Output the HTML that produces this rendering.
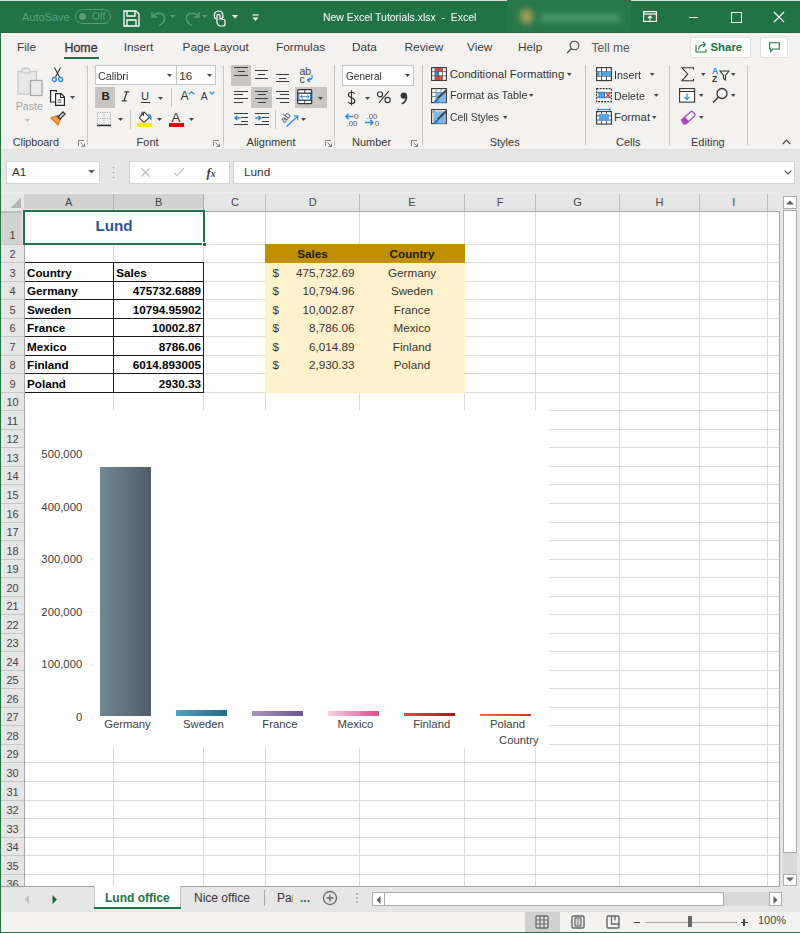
<!DOCTYPE html><html><head><meta charset="utf-8"><style>
html,body{margin:0;padding:0;}
body{width:800px;height:933px;overflow:hidden;position:relative;background:#F3F2F1;font-family:"Liberation Sans", sans-serif;}
div,svg{box-sizing:border-box;}
</style></head><body><div style="position:absolute;left:0px;top:0px;width:800px;height:1px;background:#DCDCDC"></div><div style="position:absolute;left:0px;top:1px;width:800px;height:32px;background:#217346"></div><div style="position:absolute;left:0px;top:32px;width:800px;height:1px;background:#1D6A40"></div><div style="position:absolute;left:507px;top:0;width:124px;height:32px;overflow:hidden;background:#267849"><div style="position:absolute;left:13px;top:9px;width:13px;height:15px;background:#A89E58;border-radius:7px;filter:blur(3px)"></div><div style="position:absolute;left:32px;top:14px;width:82px;height:8px;background:#4E9670;border-radius:4px;filter:blur(3px)"></div></div><div style="position:absolute;left:22px;top:11.99px;font-size:11px;line-height:11px;color:#5E9F7B;font-weight:400;white-space:nowrap;">AutoSave</div><div style="position:absolute;left:75px;top:9px;width:36px;height:15px;border:1px solid #5E9F7B;border-radius:8px"></div><div style="position:absolute;left:79px;top:13px;width:7px;height:7px;background:#5E9F7B;border-radius:4px"></div><div style="position:absolute;left:92px;top:12.04px;font-size:10px;line-height:10px;color:#5E9F7B;font-weight:400;white-space:nowrap;">Off</div><div style="position:absolute;left:322.5px;top:11.73px;font-size:11.3px;line-height:11.3px;color:#FFFFFF;font-weight:400;white-space:nowrap;transform:scaleX(0.925);transform-origin:0 0">New Excel Tutorials.xlsx&nbsp;&nbsp;-&nbsp;&nbsp;Excel</div><div style="position:absolute;left:17px;top:42.11px;font-size:11.8px;line-height:11.8px;color:#3A3A3A;font-weight:400;white-space:nowrap;">File</div><div style="position:absolute;left:64.5px;top:41.60px;font-size:12.4px;line-height:12.4px;color:#333;font-weight:400;white-space:nowrap;-webkit-text-stroke:0.3px #333">Home</div><div style="position:absolute;left:123.7px;top:42.11px;font-size:11.8px;line-height:11.8px;color:#3A3A3A;font-weight:400;white-space:nowrap;">Insert</div><div style="position:absolute;left:182.6px;top:42.11px;font-size:11.8px;line-height:11.8px;color:#3A3A3A;font-weight:400;white-space:nowrap;">Page Layout</div><div style="position:absolute;left:276px;top:42.11px;font-size:11.8px;line-height:11.8px;color:#3A3A3A;font-weight:400;white-space:nowrap;">Formulas</div><div style="position:absolute;left:352px;top:42.11px;font-size:11.8px;line-height:11.8px;color:#3A3A3A;font-weight:400;white-space:nowrap;">Data</div><div style="position:absolute;left:404.6px;top:42.11px;font-size:11.8px;line-height:11.8px;color:#3A3A3A;font-weight:400;white-space:nowrap;">Review</div><div style="position:absolute;left:467px;top:42.11px;font-size:11.8px;line-height:11.8px;color:#3A3A3A;font-weight:400;white-space:nowrap;">View</div><div style="position:absolute;left:518px;top:42.11px;font-size:11.8px;line-height:11.8px;color:#3A3A3A;font-weight:400;white-space:nowrap;">Help</div><div style="position:absolute;left:64px;top:57px;width:35px;height:2px;background:#217346"></div><div style="position:absolute;left:591.5px;top:41.76px;font-size:12.1px;line-height:12.1px;color:#555;font-weight:400;white-space:nowrap;">Tell me</div><div style="position:absolute;left:689.5px;top:37px;width:61.5px;height:20.5px;background:#fff;border:1px solid #E1DFDD;border-radius:2px"></div><div style="position:absolute;left:710.5px;top:41.85px;font-size:11.4px;line-height:11.4px;color:#217346;font-weight:700;white-space:nowrap;">Share</div><div style="position:absolute;left:759.5px;top:37px;width:28.5px;height:20.5px;background:#fff;border:1px solid #E1DFDD;border-radius:2px"></div><div style="position:absolute;left:86.5px;top:65px;width:1px;height:80px;background:#C8C6C4"></div><div style="position:absolute;left:222.8px;top:65px;width:1px;height:80px;background:#C8C6C4"></div><div style="position:absolute;left:334.4px;top:65px;width:1px;height:80px;background:#C8C6C4"></div><div style="position:absolute;left:421.5px;top:65px;width:1px;height:80px;background:#C8C6C4"></div><div style="position:absolute;left:585.4px;top:65px;width:1px;height:80px;background:#C8C6C4"></div><div style="position:absolute;left:669.4px;top:65px;width:1px;height:80px;background:#C8C6C4"></div><div style="position:absolute;left:747.2px;top:65px;width:1px;height:80px;background:#C8C6C4"></div><div style="position:absolute;left:12.7px;top:136.86px;font-size:10.8px;line-height:10.8px;color:#363636;font-weight:400;white-space:nowrap;">Clipboard</div><div style="position:absolute;left:136.6px;top:136.69px;font-size:11px;line-height:11px;color:#363636;font-weight:400;white-space:nowrap;">Font</div><div style="position:absolute;left:246.6px;top:136.69px;font-size:11px;line-height:11px;color:#363636;font-weight:400;white-space:nowrap;">Alignment</div><div style="position:absolute;left:352px;top:136.69px;font-size:11px;line-height:11px;color:#363636;font-weight:400;white-space:nowrap;">Number</div><div style="position:absolute;left:489.7px;top:136.69px;font-size:11px;line-height:11px;color:#363636;font-weight:400;white-space:nowrap;">Styles</div><div style="position:absolute;left:616px;top:136.69px;font-size:11px;line-height:11px;color:#363636;font-weight:400;white-space:nowrap;">Cells</div><div style="position:absolute;left:691px;top:136.69px;font-size:11px;line-height:11px;color:#363636;font-weight:400;white-space:nowrap;">Editing</div><div style="position:absolute;left:0px;top:149.5px;width:800px;height:44px;background:#E6E6E6"></div><div style="position:absolute;left:0px;top:149px;width:800px;height:1px;background:#E1DFDD"></div><div style="position:absolute;left:5.6px;top:160.5px;width:94px;height:23.2px;background:#fff;border:1px solid #D4D4D4"></div><div style="position:absolute;left:12px;top:166.51px;font-size:11.8px;line-height:11.8px;color:#333;font-weight:400;white-space:nowrap;">A1</div><div style="position:absolute;left:128.6px;top:160.5px;width:101px;height:23.2px;background:#fff;border:1px solid #D4D4D4"></div><div style="position:absolute;left:233.2px;top:160.5px;width:562px;height:23.2px;background:#fff;border:1px solid #D4D4D4"></div><div style="position:absolute;left:244px;top:166.51px;font-size:11.8px;line-height:11.8px;color:#333;font-weight:400;white-space:nowrap;">Lund</div><div style="position:absolute;left:1px;top:192px;width:780px;height:20px;background:#E6E6E6"></div><div style="position:absolute;left:1px;top:192px;width:780px;height:1.5px;background:#EBEBEB"></div><div style="position:absolute;left:1px;top:212px;width:24px;height:674px;background:#E6E6E6"></div><div style="position:absolute;left:25px;top:212px;width:754px;height:674px;background:#fff"></div><div style="position:absolute;left:25px;top:243.5px;width:754px;height:1px;background:#DADADA"></div><div style="position:absolute;left:25px;top:262.035px;width:754px;height:1px;background:#DADADA"></div><div style="position:absolute;left:25px;top:280.57px;width:754px;height:1px;background:#DADADA"></div><div style="position:absolute;left:25px;top:299.105px;width:754px;height:1px;background:#DADADA"></div><div style="position:absolute;left:25px;top:317.64px;width:754px;height:1px;background:#DADADA"></div><div style="position:absolute;left:25px;top:336.175px;width:754px;height:1px;background:#DADADA"></div><div style="position:absolute;left:25px;top:354.71000000000004px;width:754px;height:1px;background:#DADADA"></div><div style="position:absolute;left:25px;top:373.245px;width:754px;height:1px;background:#DADADA"></div><div style="position:absolute;left:25px;top:391.78px;width:754px;height:1px;background:#DADADA"></div><div style="position:absolute;left:25px;top:410.315px;width:754px;height:1px;background:#DADADA"></div><div style="position:absolute;left:25px;top:428.85px;width:754px;height:1px;background:#DADADA"></div><div style="position:absolute;left:25px;top:447.385px;width:754px;height:1px;background:#DADADA"></div><div style="position:absolute;left:25px;top:465.92px;width:754px;height:1px;background:#DADADA"></div><div style="position:absolute;left:25px;top:484.45500000000004px;width:754px;height:1px;background:#DADADA"></div><div style="position:absolute;left:25px;top:502.99px;width:754px;height:1px;background:#DADADA"></div><div style="position:absolute;left:25px;top:521.525px;width:754px;height:1px;background:#DADADA"></div><div style="position:absolute;left:25px;top:540.06px;width:754px;height:1px;background:#DADADA"></div><div style="position:absolute;left:25px;top:558.595px;width:754px;height:1px;background:#DADADA"></div><div style="position:absolute;left:25px;top:577.13px;width:754px;height:1px;background:#DADADA"></div><div style="position:absolute;left:25px;top:595.665px;width:754px;height:1px;background:#DADADA"></div><div style="position:absolute;left:25px;top:614.2px;width:754px;height:1px;background:#DADADA"></div><div style="position:absolute;left:25px;top:632.735px;width:754px;height:1px;background:#DADADA"></div><div style="position:absolute;left:25px;top:651.27px;width:754px;height:1px;background:#DADADA"></div><div style="position:absolute;left:25px;top:669.8050000000001px;width:754px;height:1px;background:#DADADA"></div><div style="position:absolute;left:25px;top:688.34px;width:754px;height:1px;background:#DADADA"></div><div style="position:absolute;left:25px;top:706.875px;width:754px;height:1px;background:#DADADA"></div><div style="position:absolute;left:25px;top:725.4100000000001px;width:754px;height:1px;background:#DADADA"></div><div style="position:absolute;left:25px;top:743.9449999999999px;width:754px;height:1px;background:#DADADA"></div><div style="position:absolute;left:25px;top:762.48px;width:754px;height:1px;background:#DADADA"></div><div style="position:absolute;left:25px;top:781.015px;width:754px;height:1px;background:#DADADA"></div><div style="position:absolute;left:25px;top:799.55px;width:754px;height:1px;background:#DADADA"></div><div style="position:absolute;left:25px;top:818.085px;width:754px;height:1px;background:#DADADA"></div><div style="position:absolute;left:25px;top:836.62px;width:754px;height:1px;background:#DADADA"></div><div style="position:absolute;left:25px;top:855.155px;width:754px;height:1px;background:#DADADA"></div><div style="position:absolute;left:25px;top:873.69px;width:754px;height:1px;background:#DADADA"></div><div style="position:absolute;left:113px;top:212px;width:1px;height:674px;background:#DADADA"></div><div style="position:absolute;left:203px;top:212px;width:1px;height:674px;background:#DADADA"></div><div style="position:absolute;left:265px;top:212px;width:1px;height:674px;background:#DADADA"></div><div style="position:absolute;left:359px;top:212px;width:1px;height:674px;background:#DADADA"></div><div style="position:absolute;left:464px;top:212px;width:1px;height:674px;background:#DADADA"></div><div style="position:absolute;left:535px;top:212px;width:1px;height:674px;background:#DADADA"></div><div style="position:absolute;left:619px;top:212px;width:1px;height:674px;background:#DADADA"></div><div style="position:absolute;left:699px;top:212px;width:1px;height:674px;background:#DADADA"></div><div style="position:absolute;left:767px;top:212px;width:1px;height:674px;background:#DADADA"></div><div style="position:absolute;left:113px;top:194px;width:1px;height:17px;background:#BDBDBD"></div><div style="position:absolute;left:203px;top:194px;width:1px;height:17px;background:#BDBDBD"></div><div style="position:absolute;left:265px;top:194px;width:1px;height:17px;background:#BDBDBD"></div><div style="position:absolute;left:359px;top:194px;width:1px;height:17px;background:#BDBDBD"></div><div style="position:absolute;left:464px;top:194px;width:1px;height:17px;background:#BDBDBD"></div><div style="position:absolute;left:535px;top:194px;width:1px;height:17px;background:#BDBDBD"></div><div style="position:absolute;left:619px;top:194px;width:1px;height:17px;background:#BDBDBD"></div><div style="position:absolute;left:699px;top:194px;width:1px;height:17px;background:#BDBDBD"></div><div style="position:absolute;left:767px;top:194px;width:1px;height:17px;background:#BDBDBD"></div><div style="position:absolute;left:24px;top:194px;width:180px;height:15px;background:#D2D2D2"></div><div style="position:absolute;left:24px;top:209px;width:180px;height:1px;background:#EDE5EA"></div><div style="position:absolute;left:113px;top:194px;width:1px;height:16px;background:#B0B0B0"></div><div style="position:absolute;left:203px;top:194px;width:1px;height:16px;background:#ABABAB"></div><div style="position:absolute;left:1px;top:211px;width:780px;height:1px;background:#ABABAB"></div><div style="position:absolute;left:1px;top:212px;width:22px;height:32px;background:#D2D2D2"></div><div style="position:absolute;left:1px;top:211px;width:22px;height:1.5px;background:#BDBDBD"></div><div style="position:absolute;left:22px;top:211px;width:1px;height:33px;background:#EDE5EA"></div><div style="position:absolute;left:24px;top:212px;width:1px;height:674px;background:#A6A6A6"></div><div style="position:absolute;left:1px;top:243.5px;width:23px;height:1px;background:#C8C8C8"></div><div style="position:absolute;left:1px;top:262.035px;width:23px;height:1px;background:#C8C8C8"></div><div style="position:absolute;left:1px;top:280.57px;width:23px;height:1px;background:#C8C8C8"></div><div style="position:absolute;left:1px;top:299.105px;width:23px;height:1px;background:#C8C8C8"></div><div style="position:absolute;left:1px;top:317.64px;width:23px;height:1px;background:#C8C8C8"></div><div style="position:absolute;left:1px;top:336.175px;width:23px;height:1px;background:#C8C8C8"></div><div style="position:absolute;left:1px;top:354.71000000000004px;width:23px;height:1px;background:#C8C8C8"></div><div style="position:absolute;left:1px;top:373.245px;width:23px;height:1px;background:#C8C8C8"></div><div style="position:absolute;left:1px;top:391.78px;width:23px;height:1px;background:#C8C8C8"></div><div style="position:absolute;left:1px;top:410.315px;width:23px;height:1px;background:#C8C8C8"></div><div style="position:absolute;left:1px;top:428.85px;width:23px;height:1px;background:#C8C8C8"></div><div style="position:absolute;left:1px;top:447.385px;width:23px;height:1px;background:#C8C8C8"></div><div style="position:absolute;left:1px;top:465.92px;width:23px;height:1px;background:#C8C8C8"></div><div style="position:absolute;left:1px;top:484.45500000000004px;width:23px;height:1px;background:#C8C8C8"></div><div style="position:absolute;left:1px;top:502.99px;width:23px;height:1px;background:#C8C8C8"></div><div style="position:absolute;left:1px;top:521.525px;width:23px;height:1px;background:#C8C8C8"></div><div style="position:absolute;left:1px;top:540.06px;width:23px;height:1px;background:#C8C8C8"></div><div style="position:absolute;left:1px;top:558.595px;width:23px;height:1px;background:#C8C8C8"></div><div style="position:absolute;left:1px;top:577.13px;width:23px;height:1px;background:#C8C8C8"></div><div style="position:absolute;left:1px;top:595.665px;width:23px;height:1px;background:#C8C8C8"></div><div style="position:absolute;left:1px;top:614.2px;width:23px;height:1px;background:#C8C8C8"></div><div style="position:absolute;left:1px;top:632.735px;width:23px;height:1px;background:#C8C8C8"></div><div style="position:absolute;left:1px;top:651.27px;width:23px;height:1px;background:#C8C8C8"></div><div style="position:absolute;left:1px;top:669.8050000000001px;width:23px;height:1px;background:#C8C8C8"></div><div style="position:absolute;left:1px;top:688.34px;width:23px;height:1px;background:#C8C8C8"></div><div style="position:absolute;left:1px;top:706.875px;width:23px;height:1px;background:#C8C8C8"></div><div style="position:absolute;left:1px;top:725.4100000000001px;width:23px;height:1px;background:#C8C8C8"></div><div style="position:absolute;left:1px;top:743.9449999999999px;width:23px;height:1px;background:#C8C8C8"></div><div style="position:absolute;left:1px;top:762.48px;width:23px;height:1px;background:#C8C8C8"></div><div style="position:absolute;left:1px;top:781.015px;width:23px;height:1px;background:#C8C8C8"></div><div style="position:absolute;left:1px;top:799.55px;width:23px;height:1px;background:#C8C8C8"></div><div style="position:absolute;left:1px;top:818.085px;width:23px;height:1px;background:#C8C8C8"></div><div style="position:absolute;left:1px;top:836.62px;width:23px;height:1px;background:#C8C8C8"></div><div style="position:absolute;left:1px;top:855.155px;width:23px;height:1px;background:#C8C8C8"></div><div style="position:absolute;left:1px;top:873.69px;width:23px;height:1px;background:#C8C8C8"></div><svg style="position:absolute;left:10px;top:197px;" width="12" height="12" viewBox="0 0 12 12"><path d="M11 0.5 L11 11 L0.5 11 Z" fill="#B4B4B4"/></svg><div style="position:absolute;left:-131.25px;width:400px;text-align:center;top:197.19px;font-size:11px;line-height:11px;color:#444;font-weight:400;white-space:nowrap;">A</div><div style="position:absolute;left:-41.25px;width:400px;text-align:center;top:197.19px;font-size:11px;line-height:11px;color:#444;font-weight:400;white-space:nowrap;">B</div><div style="position:absolute;left:35.0px;width:400px;text-align:center;top:197.19px;font-size:11px;line-height:11px;color:#444;font-weight:400;white-space:nowrap;">C</div><div style="position:absolute;left:112.75px;width:400px;text-align:center;top:197.19px;font-size:11px;line-height:11px;color:#444;font-weight:400;white-space:nowrap;">D</div><div style="position:absolute;left:212.0px;width:400px;text-align:center;top:197.19px;font-size:11px;line-height:11px;color:#444;font-weight:400;white-space:nowrap;">E</div><div style="position:absolute;left:300.0px;width:400px;text-align:center;top:197.19px;font-size:11px;line-height:11px;color:#444;font-weight:400;white-space:nowrap;">F</div><div style="position:absolute;left:377.5px;width:400px;text-align:center;top:197.19px;font-size:11px;line-height:11px;color:#444;font-weight:400;white-space:nowrap;">G</div><div style="position:absolute;left:459.5px;width:400px;text-align:center;top:197.19px;font-size:11px;line-height:11px;color:#444;font-weight:400;white-space:nowrap;">H</div><div style="position:absolute;left:533.75px;width:400px;text-align:center;top:197.19px;font-size:11px;line-height:11px;color:#444;font-weight:400;white-space:nowrap;">I</div><div style="position:absolute;left:-187.5px;width:400px;text-align:center;top:230.49px;font-size:11px;line-height:11px;color:#444;font-weight:400;white-space:nowrap;">1</div><div style="position:absolute;left:-187.5px;width:400px;text-align:center;top:249.02px;font-size:11px;line-height:11px;color:#444;font-weight:400;white-space:nowrap;">2</div><div style="position:absolute;left:-187.5px;width:400px;text-align:center;top:267.56px;font-size:11px;line-height:11px;color:#444;font-weight:400;white-space:nowrap;">3</div><div style="position:absolute;left:-187.5px;width:400px;text-align:center;top:286.09px;font-size:11px;line-height:11px;color:#444;font-weight:400;white-space:nowrap;">4</div><div style="position:absolute;left:-187.5px;width:400px;text-align:center;top:304.63px;font-size:11px;line-height:11px;color:#444;font-weight:400;white-space:nowrap;">5</div><div style="position:absolute;left:-187.5px;width:400px;text-align:center;top:323.16px;font-size:11px;line-height:11px;color:#444;font-weight:400;white-space:nowrap;">6</div><div style="position:absolute;left:-187.5px;width:400px;text-align:center;top:341.70px;font-size:11px;line-height:11px;color:#444;font-weight:400;white-space:nowrap;">7</div><div style="position:absolute;left:-187.5px;width:400px;text-align:center;top:360.23px;font-size:11px;line-height:11px;color:#444;font-weight:400;white-space:nowrap;">8</div><div style="position:absolute;left:-187.5px;width:400px;text-align:center;top:378.77px;font-size:11px;line-height:11px;color:#444;font-weight:400;white-space:nowrap;">9</div><div style="position:absolute;left:-187.5px;width:400px;text-align:center;top:397.30px;font-size:11px;line-height:11px;color:#444;font-weight:400;white-space:nowrap;">10</div><div style="position:absolute;left:-187.5px;width:400px;text-align:center;top:415.84px;font-size:11px;line-height:11px;color:#444;font-weight:400;white-space:nowrap;">11</div><div style="position:absolute;left:-187.5px;width:400px;text-align:center;top:434.37px;font-size:11px;line-height:11px;color:#444;font-weight:400;white-space:nowrap;">12</div><div style="position:absolute;left:-187.5px;width:400px;text-align:center;top:452.91px;font-size:11px;line-height:11px;color:#444;font-weight:400;white-space:nowrap;">13</div><div style="position:absolute;left:-187.5px;width:400px;text-align:center;top:471.44px;font-size:11px;line-height:11px;color:#444;font-weight:400;white-space:nowrap;">14</div><div style="position:absolute;left:-187.5px;width:400px;text-align:center;top:489.98px;font-size:11px;line-height:11px;color:#444;font-weight:400;white-space:nowrap;">15</div><div style="position:absolute;left:-187.5px;width:400px;text-align:center;top:508.51px;font-size:11px;line-height:11px;color:#444;font-weight:400;white-space:nowrap;">16</div><div style="position:absolute;left:-187.5px;width:400px;text-align:center;top:527.05px;font-size:11px;line-height:11px;color:#444;font-weight:400;white-space:nowrap;">17</div><div style="position:absolute;left:-187.5px;width:400px;text-align:center;top:545.58px;font-size:11px;line-height:11px;color:#444;font-weight:400;white-space:nowrap;">18</div><div style="position:absolute;left:-187.5px;width:400px;text-align:center;top:564.12px;font-size:11px;line-height:11px;color:#444;font-weight:400;white-space:nowrap;">19</div><div style="position:absolute;left:-187.5px;width:400px;text-align:center;top:582.65px;font-size:11px;line-height:11px;color:#444;font-weight:400;white-space:nowrap;">20</div><div style="position:absolute;left:-187.5px;width:400px;text-align:center;top:601.19px;font-size:11px;line-height:11px;color:#444;font-weight:400;white-space:nowrap;">21</div><div style="position:absolute;left:-187.5px;width:400px;text-align:center;top:619.72px;font-size:11px;line-height:11px;color:#444;font-weight:400;white-space:nowrap;">22</div><div style="position:absolute;left:-187.5px;width:400px;text-align:center;top:638.26px;font-size:11px;line-height:11px;color:#444;font-weight:400;white-space:nowrap;">23</div><div style="position:absolute;left:-187.5px;width:400px;text-align:center;top:656.79px;font-size:11px;line-height:11px;color:#444;font-weight:400;white-space:nowrap;">24</div><div style="position:absolute;left:-187.5px;width:400px;text-align:center;top:675.33px;font-size:11px;line-height:11px;color:#444;font-weight:400;white-space:nowrap;">25</div><div style="position:absolute;left:-187.5px;width:400px;text-align:center;top:693.86px;font-size:11px;line-height:11px;color:#444;font-weight:400;white-space:nowrap;">26</div><div style="position:absolute;left:-187.5px;width:400px;text-align:center;top:712.40px;font-size:11px;line-height:11px;color:#444;font-weight:400;white-space:nowrap;">27</div><div style="position:absolute;left:-187.5px;width:400px;text-align:center;top:730.93px;font-size:11px;line-height:11px;color:#444;font-weight:400;white-space:nowrap;">28</div><div style="position:absolute;left:-187.5px;width:400px;text-align:center;top:749.47px;font-size:11px;line-height:11px;color:#444;font-weight:400;white-space:nowrap;">29</div><div style="position:absolute;left:-187.5px;width:400px;text-align:center;top:768.00px;font-size:11px;line-height:11px;color:#444;font-weight:400;white-space:nowrap;">30</div><div style="position:absolute;left:-187.5px;width:400px;text-align:center;top:786.54px;font-size:11px;line-height:11px;color:#444;font-weight:400;white-space:nowrap;">31</div><div style="position:absolute;left:-187.5px;width:400px;text-align:center;top:805.07px;font-size:11px;line-height:11px;color:#444;font-weight:400;white-space:nowrap;">32</div><div style="position:absolute;left:-187.5px;width:400px;text-align:center;top:823.61px;font-size:11px;line-height:11px;color:#444;font-weight:400;white-space:nowrap;">33</div><div style="position:absolute;left:-187.5px;width:400px;text-align:center;top:842.14px;font-size:11px;line-height:11px;color:#444;font-weight:400;white-space:nowrap;">34</div><div style="position:absolute;left:-187.5px;width:400px;text-align:center;top:860.68px;font-size:11px;line-height:11px;color:#444;font-weight:400;white-space:nowrap;">35</div><div style="position:absolute;left:779px;top:211px;width:1px;height:676px;background:#A0A0A0"></div><div style="position:absolute;left:1px;top:886px;width:779px;height:1px;background:#A0A0A0"></div><div style="position:absolute;left:0px;top:33px;width:1px;height:900px;background:#217346"></div><div style="position:absolute;left:265px;top:243.5px;width:200px;height:149.27999999999997px;background:#FFF2CC"></div><div style="position:absolute;left:265px;top:244.0px;width:200px;height:18.535000000000025px;background:#BF8F00"></div><div style="position:absolute;left:25px;top:262.035px;width:179px;height:1px;background:#1A1A1A"></div><div style="position:absolute;left:25px;top:280.57px;width:179px;height:1px;background:#1A1A1A"></div><div style="position:absolute;left:25px;top:299.105px;width:179px;height:1px;background:#1A1A1A"></div><div style="position:absolute;left:25px;top:317.64px;width:179px;height:1px;background:#1A1A1A"></div><div style="position:absolute;left:25px;top:336.175px;width:179px;height:1px;background:#1A1A1A"></div><div style="position:absolute;left:25px;top:354.71000000000004px;width:179px;height:1px;background:#1A1A1A"></div><div style="position:absolute;left:25px;top:373.245px;width:179px;height:1px;background:#1A1A1A"></div><div style="position:absolute;left:25px;top:391.78px;width:179px;height:1px;background:#1A1A1A"></div><div style="position:absolute;left:113.0px;top:262.035px;width:1px;height:130.74499999999995px;background:#1A1A1A"></div><div style="position:absolute;left:203.0px;top:262.035px;width:1px;height:130.74499999999995px;background:#1A1A1A"></div><div style="position:absolute;left:27px;top:266.57px;font-size:11.7px;line-height:11.7px;color:#000;font-weight:700;white-space:nowrap;">Country</div><div style="position:absolute;left:116.2px;top:266.57px;font-size:11.7px;line-height:11.7px;color:#000;font-weight:700;white-space:nowrap;">Sales</div><div style="position:absolute;left:27px;top:285.10px;font-size:11.7px;line-height:11.7px;color:#000;font-weight:700;white-space:nowrap;">Germany</div><div style="position:absolute;right:599px;top:285.10px;font-size:11.7px;line-height:11.7px;color:#000;font-weight:700;white-space:nowrap;">475732.6889</div><div style="position:absolute;left:27px;top:303.64px;font-size:11.7px;line-height:11.7px;color:#000;font-weight:700;white-space:nowrap;">Sweden</div><div style="position:absolute;right:599px;top:303.64px;font-size:11.7px;line-height:11.7px;color:#000;font-weight:700;white-space:nowrap;">10794.95902</div><div style="position:absolute;left:27px;top:322.17px;font-size:11.7px;line-height:11.7px;color:#000;font-weight:700;white-space:nowrap;">France</div><div style="position:absolute;right:599px;top:322.17px;font-size:11.7px;line-height:11.7px;color:#000;font-weight:700;white-space:nowrap;">10002.87</div><div style="position:absolute;left:27px;top:340.71px;font-size:11.7px;line-height:11.7px;color:#000;font-weight:700;white-space:nowrap;">Mexico</div><div style="position:absolute;right:599px;top:340.71px;font-size:11.7px;line-height:11.7px;color:#000;font-weight:700;white-space:nowrap;">8786.06</div><div style="position:absolute;left:27px;top:359.24px;font-size:11.7px;line-height:11.7px;color:#000;font-weight:700;white-space:nowrap;">Finland</div><div style="position:absolute;right:599px;top:359.24px;font-size:11.7px;line-height:11.7px;color:#000;font-weight:700;white-space:nowrap;">6014.893005</div><div style="position:absolute;left:27px;top:377.78px;font-size:11.7px;line-height:11.7px;color:#000;font-weight:700;white-space:nowrap;">Poland</div><div style="position:absolute;right:599px;top:377.78px;font-size:11.7px;line-height:11.7px;color:#000;font-weight:700;white-space:nowrap;">2930.33</div><div style="position:absolute;left:112.5px;width:400px;text-align:center;top:248.03px;font-size:11.7px;line-height:11.7px;color:#1A1A1A;font-weight:700;white-space:nowrap;">Sales</div><div style="position:absolute;left:212px;width:400px;text-align:center;top:248.03px;font-size:11.7px;line-height:11.7px;color:#1A1A1A;font-weight:700;white-space:nowrap;">Country</div><div style="position:absolute;left:272.5px;top:266.57px;font-size:11.7px;line-height:11.7px;color:#333;font-weight:400;white-space:nowrap;">$</div><div style="position:absolute;right:445.5px;top:266.57px;font-size:11.7px;line-height:11.7px;color:#333;font-weight:400;white-space:nowrap;">475,732.69</div><div style="position:absolute;left:212px;width:400px;text-align:center;top:266.57px;font-size:11.7px;line-height:11.7px;color:#333;font-weight:400;white-space:nowrap;">Germany</div><div style="position:absolute;left:272.5px;top:285.10px;font-size:11.7px;line-height:11.7px;color:#333;font-weight:400;white-space:nowrap;">$</div><div style="position:absolute;right:445.5px;top:285.10px;font-size:11.7px;line-height:11.7px;color:#333;font-weight:400;white-space:nowrap;">10,794.96</div><div style="position:absolute;left:212px;width:400px;text-align:center;top:285.10px;font-size:11.7px;line-height:11.7px;color:#333;font-weight:400;white-space:nowrap;">Sweden</div><div style="position:absolute;left:272.5px;top:303.64px;font-size:11.7px;line-height:11.7px;color:#333;font-weight:400;white-space:nowrap;">$</div><div style="position:absolute;right:445.5px;top:303.64px;font-size:11.7px;line-height:11.7px;color:#333;font-weight:400;white-space:nowrap;">10,002.87</div><div style="position:absolute;left:212px;width:400px;text-align:center;top:303.64px;font-size:11.7px;line-height:11.7px;color:#333;font-weight:400;white-space:nowrap;">France</div><div style="position:absolute;left:272.5px;top:322.17px;font-size:11.7px;line-height:11.7px;color:#333;font-weight:400;white-space:nowrap;">$</div><div style="position:absolute;right:445.5px;top:322.17px;font-size:11.7px;line-height:11.7px;color:#333;font-weight:400;white-space:nowrap;">8,786.06</div><div style="position:absolute;left:212px;width:400px;text-align:center;top:322.17px;font-size:11.7px;line-height:11.7px;color:#333;font-weight:400;white-space:nowrap;">Mexico</div><div style="position:absolute;left:272.5px;top:340.71px;font-size:11.7px;line-height:11.7px;color:#333;font-weight:400;white-space:nowrap;">$</div><div style="position:absolute;right:445.5px;top:340.71px;font-size:11.7px;line-height:11.7px;color:#333;font-weight:400;white-space:nowrap;">6,014.89</div><div style="position:absolute;left:212px;width:400px;text-align:center;top:340.71px;font-size:11.7px;line-height:11.7px;color:#333;font-weight:400;white-space:nowrap;">Finland</div><div style="position:absolute;left:272.5px;top:359.24px;font-size:11.7px;line-height:11.7px;color:#333;font-weight:400;white-space:nowrap;">$</div><div style="position:absolute;right:445.5px;top:359.24px;font-size:11.7px;line-height:11.7px;color:#333;font-weight:400;white-space:nowrap;">2,930.33</div><div style="position:absolute;left:212px;width:400px;text-align:center;top:359.24px;font-size:11.7px;line-height:11.7px;color:#333;font-weight:400;white-space:nowrap;">Poland</div><div style="position:absolute;left:25px;top:212px;width:178px;height:32px;background:#fff"></div><div style="position:absolute;left:-86px;width:400px;text-align:center;top:218.23px;font-size:15.2px;line-height:15.2px;color:#2F5496;font-weight:700;white-space:nowrap;">Lund</div><div style="position:absolute;left:23px;top:210px;width:182px;height:35px;border:2px solid #217346"></div><div style="position:absolute;left:202px;top:242px;width:5px;height:5px;background:#217346;border:1px solid #fff"></div><div style="position:absolute;left:25px;top:410px;width:524px;height:338px;background:#fff"></div><div style="position:absolute;right:717.8px;top:712.03px;font-size:11.3px;line-height:11.3px;color:#404040;font-weight:400;white-space:nowrap;">0</div><div style="position:absolute;left:91px;top:716.9px;width:1px;height:1px;background:#BFBFBF"></div><div style="position:absolute;right:717.8px;top:659.43px;font-size:11.3px;line-height:11.3px;color:#404040;font-weight:400;white-space:nowrap;">100,000</div><div style="position:absolute;left:91px;top:664.3px;width:1px;height:1px;background:#BFBFBF"></div><div style="position:absolute;right:717.8px;top:606.83px;font-size:11.3px;line-height:11.3px;color:#404040;font-weight:400;white-space:nowrap;">200,000</div><div style="position:absolute;left:91px;top:611.6999999999999px;width:1px;height:1px;background:#BFBFBF"></div><div style="position:absolute;right:717.8px;top:554.23px;font-size:11.3px;line-height:11.3px;color:#404040;font-weight:400;white-space:nowrap;">300,000</div><div style="position:absolute;left:91px;top:559.0999999999999px;width:1px;height:1px;background:#BFBFBF"></div><div style="position:absolute;right:717.8px;top:501.63px;font-size:11.3px;line-height:11.3px;color:#404040;font-weight:400;white-space:nowrap;">400,000</div><div style="position:absolute;left:91px;top:506.5px;width:1px;height:1px;background:#BFBFBF"></div><div style="position:absolute;right:717.8px;top:449.03px;font-size:11.3px;line-height:11.3px;color:#404040;font-weight:400;white-space:nowrap;">500,000</div><div style="position:absolute;left:91px;top:453.9px;width:1px;height:1px;background:#BFBFBF"></div><div style="position:absolute;left:100px;top:467.09665659200004px;width:51px;height:248.90334340799998px;background:linear-gradient(90deg,#718793,#4E5E67)"></div><div style="position:absolute;left:176px;top:710.352076928px;width:51px;height:5.647923071999999px;background:linear-gradient(90deg,#4FA3C7,#226A8C)"></div><div style="position:absolute;left:252.4px;top:710.766498416px;width:51px;height:5.233501584000001px;background:linear-gradient(90deg,#A995BF,#6E5490)"></div><div style="position:absolute;left:328px;top:711.403133408px;width:51px;height:4.596866592px;background:linear-gradient(90deg,#F7D0E3,#DB4C8E)"></div><div style="position:absolute;left:404.2px;top:712.853009552px;width:51px;height:3.1469904480000004px;background:linear-gradient(90deg,#E54A4A,#B3161A)"></div><div style="position:absolute;left:480px;top:714.466851344px;width:51px;height:1.533148656px;background:linear-gradient(90deg,#EF6A3A,#C63F1E)"></div><div style="position:absolute;left:-72.5px;width:400px;text-align:center;top:718.73px;font-size:11.3px;line-height:11.3px;color:#404040;font-weight:400;white-space:nowrap;">Germany</div><div style="position:absolute;left:3.5px;width:400px;text-align:center;top:718.73px;font-size:11.3px;line-height:11.3px;color:#404040;font-weight:400;white-space:nowrap;">Sweden</div><div style="position:absolute;left:79.89999999999998px;width:400px;text-align:center;top:718.73px;font-size:11.3px;line-height:11.3px;color:#404040;font-weight:400;white-space:nowrap;">France</div><div style="position:absolute;left:155.5px;width:400px;text-align:center;top:718.73px;font-size:11.3px;line-height:11.3px;color:#404040;font-weight:400;white-space:nowrap;">Mexico</div><div style="position:absolute;left:231.7px;width:400px;text-align:center;top:718.73px;font-size:11.3px;line-height:11.3px;color:#404040;font-weight:400;white-space:nowrap;">Finland</div><div style="position:absolute;left:307.5px;width:400px;text-align:center;top:718.73px;font-size:11.3px;line-height:11.3px;color:#404040;font-weight:400;white-space:nowrap;">Poland</div><div style="position:absolute;left:499px;top:734.73px;font-size:11.3px;line-height:11.3px;color:#404040;font-weight:400;white-space:nowrap;">Country</div><div style="position:absolute;left:780px;top:194px;width:20px;height:692px;background:#E6E6E6"></div><div style="position:absolute;left:783.4px;top:196px;width:13.2px;height:13.3px;background:#fff;border:1px solid #ABABAB"></div><svg style="position:absolute;left:786px;top:200px;" width="8" height="5" viewBox="0 0 8 5"><path d="M0 4.5 L4 0.5 L8 4.5 Z" fill="#5F5F5F"/></svg><div style="position:absolute;left:783.4px;top:210px;width:13.2px;height:643px;background:#fff;border:1px solid #ABABAB"></div><div style="position:absolute;left:783.4px;top:853px;width:13.2px;height:20.5px;background:#D9D9D9"></div><div style="position:absolute;left:783.4px;top:873.5px;width:13.2px;height:12.5px;background:#fff;border:1px solid #ABABAB"></div><svg style="position:absolute;left:786px;top:877px;" width="8" height="5" viewBox="0 0 8 5"><path d="M0 0.5 L4 4.5 L8 0.5 Z" fill="#5F5F5F"/></svg><div style="position:absolute;left:1px;top:887px;width:799px;height:25px;background:#E6E6E6"></div><div style="position:absolute;left:1px;top:886px;width:779px;height:1px;background:#A0A0A0"></div><svg style="position:absolute;left:24px;top:895px;" width="6" height="9" viewBox="0 0 6 9"><path d="M5 0 L0.5 4.5 L5 9 Z" fill="#C0C0C0"/></svg><svg style="position:absolute;left:52px;top:895px;" width="6" height="9" viewBox="0 0 6 9"><path d="M0.5 0 L5 4.5 L0.5 9 Z" fill="#1E6B40"/></svg><div style="position:absolute;left:93.7px;top:886px;width:87.5px;height:23px;background:#fff;border-left:1px solid #C6C6C6;border-right:1px solid #C6C6C6"></div><div style="position:absolute;left:93.7px;top:907px;width:87.5px;height:2px;background:#217346"></div><div style="position:absolute;left:105px;top:891.84px;font-size:12px;line-height:12px;color:#217346;font-weight:700;white-space:nowrap;">Lund office</div><div style="position:absolute;left:194px;top:891.84px;font-size:12px;line-height:12px;color:#333;font-weight:400;white-space:nowrap;">Nice office</div><div style="position:absolute;left:264px;top:890px;width:1px;height:16px;background:#A6A6A6"></div><div style="position:absolute;left:277px;top:891.84px;font-size:12px;line-height:12px;color:#333;font-weight:400;white-space:nowrap;"><span style="display:inline-block;width:16px;overflow:hidden;vertical-align:top">Par</span></div><div style="position:absolute;left:300px;top:891.84px;font-size:12px;line-height:12px;color:#217346;font-weight:700;white-space:nowrap;">...</div><svg style="position:absolute;left:322px;top:890px;" width="16" height="16" viewBox="0 0 16 16"><circle cx="8" cy="8" r="6.5" fill="none" stroke="#666" stroke-width="1.3"/><path d="M8 4.5 V11.5 M4.5 8 H11.5" stroke="#666" stroke-width="1.3"/></svg><svg style="position:absolute;left:355px;top:892px;" width="4" height="12" viewBox="0 0 4 12"><circle cx="2" cy="2" r="0.9" fill="#999"/><circle cx="2" cy="6" r="0.9" fill="#999"/><circle cx="2" cy="10" r="0.9" fill="#999"/></svg><div style="position:absolute;left:372px;top:892.3px;width:351.5px;height:13.3px;background:#fff;border:1px solid #ABABAB"></div><div style="position:absolute;left:372px;top:892.3px;width:13px;height:13.3px;background:#fff;border:1px solid #ABABAB"></div><svg style="position:absolute;left:376px;top:895.5px;" width="5" height="8" viewBox="0 0 5 8"><path d="M4.5 0 L0.5 4 L4.5 8 Z" fill="#5F5F5F"/></svg><div style="position:absolute;left:723.5px;top:892.3px;width:45px;height:13.3px;background:#D9D9D9"></div><div style="position:absolute;left:768.5px;top:892.3px;width:13.4px;height:13.3px;background:#fff;border:1px solid #ABABAB"></div><svg style="position:absolute;left:773px;top:895.5px;" width="5" height="8" viewBox="0 0 5 8"><path d="M0.5 0 L4.5 4 L0.5 8 Z" fill="#5F5F5F"/></svg><div style="position:absolute;left:1px;top:911.5px;width:799px;height:1px;background:#D4D4D4"></div><div style="position:absolute;left:1px;top:912.3px;width:799px;height:19.7px;background:#F3F2F1"></div><div style="position:absolute;left:0px;top:931.5px;width:800px;height:1.5px;background:#217346"></div><div style="position:absolute;left:525px;top:912.3px;width:35px;height:19.7px;background:#D2D0CE"></div><svg style="position:absolute;left:535px;top:914.5px;" width="14" height="14" viewBox="0 0 14 14"><rect x="1" y="1" width="12" height="12" rx="1.2" fill="#E0E0E0" stroke="#6A6A6A" stroke-width="1.3"/><path d="M5 1 V13 M9 1 V13 M1 5 H13 M1 9 H13" stroke="#6A6A6A" stroke-width="1.2"/></svg><svg style="position:absolute;left:570.5px;top:914.5px;" width="14" height="14" viewBox="0 0 14 14"><rect x="1" y="1" width="12" height="12" rx="1.2" fill="none" stroke="#666" stroke-width="1.4"/><rect x="4" y="3" width="6" height="8" fill="none" stroke="#666" stroke-width="1.2"/><path d="M5.5 5 H8.5 M5.5 7 H8.5 M5.5 9 H8.5" stroke="#666" stroke-width="0.9"/></svg><svg style="position:absolute;left:605.5px;top:914.5px;" width="14" height="14" viewBox="0 0 14 14"><rect x="1" y="1" width="12" height="12" rx="1.2" fill="none" stroke="#666" stroke-width="1.4"/><path d="M5.5 1 V9 H13 M9 1 V5.5" fill="none" stroke="#666" stroke-width="1.3"/></svg><div style="position:absolute;left:634px;top:921.5px;width:6px;height:1.5px;background:#444"></div><div style="position:absolute;left:645px;top:921.8px;width:92px;height:1px;background:#A6A6A6"></div><div style="position:absolute;left:688px;top:916px;width:4px;height:11px;background:#666"></div><div style="position:absolute;left:740.5px;top:921.5px;width:7px;height:1.5px;background:#444"></div><div style="position:absolute;left:743.25px;top:918.7px;width:1.5px;height:7px;background:#444"></div><div style="position:absolute;left:758px;top:915.09px;font-size:11px;line-height:11px;color:#444;font-weight:400;white-space:nowrap;">100%</div><svg style="position:absolute;left:123px;top:10px;" width="17" height="17" viewBox="0 0 17 17"><path d="M1 1 H13 L16 4 V16 H1 Z" fill="none" stroke="#fff" stroke-width="1.3"/><path d="M4 1 V6 H12 V1" fill="none" stroke="#fff" stroke-width="1.3"/><path d="M4 16 V10 H13 V16" fill="none" stroke="#fff" stroke-width="1.3"/></svg><svg style="position:absolute;left:150px;top:10px;" width="18" height="17" viewBox="0 0 18 17"><path d="M2 2 V7 H7" fill="none" stroke="#5E9F7B" stroke-width="1.3"/><path d="M2.5 7 C5 2 13 2 14.5 7 C15.5 11 12 14 9 16" fill="none" stroke="#5E9F7B" stroke-width="1.3"/></svg><svg style="position:absolute;left:170px;top:15px;" width="6" height="4" viewBox="0 0 6 4"><path d="M0 0 H5 L2.5 3 Z" fill="#5E9F7B"/></svg><svg style="position:absolute;left:183px;top:10px;" width="18" height="17" viewBox="0 0 18 17"><path d="M16 2 V7 H11" fill="none" stroke="#5E9F7B" stroke-width="1.3"/><path d="M15.5 7 C13 2 5 2 3.5 7 C2.5 11 6 14 9 16" fill="none" stroke="#5E9F7B" stroke-width="1.3"/></svg><svg style="position:absolute;left:202px;top:15px;" width="6" height="4" viewBox="0 0 6 4"><path d="M0 0 H5 L2.5 3 Z" fill="#5E9F7B"/></svg><svg style="position:absolute;left:212px;top:10px;" width="15" height="17" viewBox="0 0 15 17"><path d="M4 9 C1 7 2 1 6.5 1 C11 1 12 6 10 9" fill="none" stroke="#fff" stroke-width="1.2"/><path d="M5 13 V5.5 C5 4 8 4 8 5.5 V9 C9 8.5 10 8.5 10.5 9.5 C11.5 9 12.5 9.5 13 10.5 V14 C13 15.5 12 16 10.5 16 H8 C7 16 6 15 5 13 Z" fill="#217346" stroke="#fff" stroke-width="1.2"/></svg><svg style="position:absolute;left:232px;top:15px;" width="7" height="4" viewBox="0 0 7 4"><path d="M0 0 H6 L3 3.5 Z" fill="#fff"/></svg><svg style="position:absolute;left:252px;top:14px;" width="7" height="8" viewBox="0 0 7 8"><path d="M0.5 1 H6.5" stroke="#fff" stroke-width="1.2"/><path d="M0.5 3.5 H6.5 L3.5 7 Z" fill="#fff"/></svg><svg style="position:absolute;left:643px;top:11px;" width="14" height="11" viewBox="0 0 14 11"><rect x="0.6" y="0.6" width="12.8" height="9.8" fill="none" stroke="#fff" stroke-width="1.2"/><path d="M0.6 3 H13.4" stroke="#fff" stroke-width="1.2"/><path d="M7 9.5 V5 M5 7 L7 5 L9 7" fill="none" stroke="#fff" stroke-width="1.1"/></svg><div style="position:absolute;left:689px;top:16.5px;width:9px;height:1.2px;background:#fff"></div><div style="position:absolute;left:731px;top:12px;width:10.5px;height:10.5px;border:1.2px solid #fff"></div><svg style="position:absolute;left:773px;top:11px;" width="12" height="12" viewBox="0 0 12 12"><path d="M1 1 L11 11 M11 1 L1 11" stroke="#fff" stroke-width="1.2"/></svg><svg style="position:absolute;left:16px;top:67px;" width="29" height="31" viewBox="0 0 29 31"><path d="M2 4.5 H6 C6 1.5 7.5 1 10 1 C12.5 1 14 1.5 14 4.5 H20.5 V27 H2 Z" fill="#E8E8E8" stroke="#C8C8C8" stroke-width="1.3"/><path d="M6 4.5 V6 H14 V4.5" fill="none" stroke="#C8C8C8" stroke-width="1.2"/><rect x="14.5" y="13.5" width="11.5" height="15" fill="#EBEBEB" stroke="#A8A8A8" stroke-width="1.3"/></svg><div style="position:absolute;left:15.8px;top:101.23px;font-size:10.6px;line-height:10.6px;color:#A6A6A6;font-weight:400;white-space:nowrap;">Paste</div><svg style="position:absolute;left:25px;top:119px;" width="5" height="3" viewBox="0 0 5 3"><path d="M0 0 H5 L2.5 3 Z" fill="#B5B5B5"/></svg><svg style="position:absolute;left:51px;top:67px;" width="13" height="16" viewBox="0 0 13 16"><path d="M3.5 0.5 L8.5 10 M9.5 0.5 L4.5 10" stroke="#333" stroke-width="1.1" fill="none"/><circle cx="3.3" cy="12.5" r="2" fill="none" stroke="#2B88D8" stroke-width="1.3"/><circle cx="9.7" cy="12.5" r="2" fill="none" stroke="#2B88D8" stroke-width="1.3"/></svg><svg style="position:absolute;left:49px;top:89px;" width="17" height="17" viewBox="0 0 17 17"><path d="M7.5 3 V1.6 H1.6 V13 H6" fill="#fff" stroke="#222" stroke-width="1.2"/><path d="M6.6 4.6 H12 L15.4 8 V16.4 H6.6 Z" fill="#fff" stroke="#222" stroke-width="1.2"/><path d="M11.5 4.6 V8.5 H15.4" fill="none" stroke="#222" stroke-width="1"/><path d="M8.5 11 H12.5 M8.5 13.2 H12.5" stroke="#444" stroke-width="0.9"/></svg><svg style="position:absolute;left:70px;top:96px;" width="5" height="3" viewBox="0 0 5 3"><path d="M0 0 H5 L2.5 3 Z" fill="#444"/></svg><svg style="position:absolute;left:49px;top:111px;" width="18" height="17" viewBox="0 0 18 17"><path d="M2 7 L9 14 L11 9 L7 5 Z" fill="#F2A040" stroke="#E07820" stroke-width="1.2"/><path d="M9 6 L14 1 L16 3 L11 8" fill="none" stroke="#333" stroke-width="1.3"/><path d="M8 4.5 L12 8.5" stroke="#333" stroke-width="1.3"/></svg><svg style="position:absolute;left:78px;top:140px;" width="7" height="7" viewBox="0 0 7 7"><path d="M0.5 6 V0.5 H6" fill="none" stroke="#777" stroke-width="0.9"/><path d="M2.5 2.5 L6.5 6.5 M6.5 3.5 V6.5 H3.5" fill="none" stroke="#777" stroke-width="0.9"/></svg><svg style="position:absolute;left:213px;top:140px;" width="7" height="7" viewBox="0 0 7 7"><path d="M0.5 6 V0.5 H6" fill="none" stroke="#777" stroke-width="0.9"/><path d="M2.5 2.5 L6.5 6.5 M6.5 3.5 V6.5 H3.5" fill="none" stroke="#777" stroke-width="0.9"/></svg><svg style="position:absolute;left:325px;top:140px;" width="7" height="7" viewBox="0 0 7 7"><path d="M0.5 6 V0.5 H6" fill="none" stroke="#777" stroke-width="0.9"/><path d="M2.5 2.5 L6.5 6.5 M6.5 3.5 V6.5 H3.5" fill="none" stroke="#777" stroke-width="0.9"/></svg><svg style="position:absolute;left:411px;top:140px;" width="7" height="7" viewBox="0 0 7 7"><path d="M0.5 6 V0.5 H6" fill="none" stroke="#777" stroke-width="0.9"/><path d="M2.5 2.5 L6.5 6.5 M6.5 3.5 V6.5 H3.5" fill="none" stroke="#777" stroke-width="0.9"/></svg><div style="position:absolute;left:94.5px;top:65.2px;width:82px;height:20.3px;background:#fff;border:1px solid #C6C6C6"></div><div style="position:absolute;left:175.8px;top:65.2px;width:40px;height:20.3px;background:#fff;border:1px solid #C6C6C6"></div><div style="position:absolute;left:98px;top:70.10px;font-size:11.7px;line-height:11.7px;color:#333;font-weight:400;white-space:nowrap;transform:scaleX(0.915);transform-origin:0 0">Calibri</div><div style="position:absolute;left:179.2px;top:70.10px;font-size:11.7px;line-height:11.7px;color:#333;font-weight:400;white-space:nowrap;">16</div><svg style="position:absolute;left:166.5px;top:74px;" width="5" height="3" viewBox="0 0 5 3"><path d="M0 0 H5 L2.5 3 Z" fill="#444"/></svg><svg style="position:absolute;left:206.5px;top:74px;" width="5" height="3" viewBox="0 0 5 3"><path d="M0 0 H5 L2.5 3 Z" fill="#444"/></svg><div style="position:absolute;left:94.5px;top:87px;width:20.5px;height:21px;background:#C8C6C4"></div><div style="position:absolute;left:101.6px;top:90.87px;font-size:11.5px;line-height:11.5px;color:#222;font-weight:700;white-space:nowrap;">B</div><svg style="position:absolute;left:121px;top:91px;" width="9" height="11" viewBox="0 0 9 11"><path d="M3.3 0.8 H8.3 M0.8 9.8 H5.8 M6 0.8 L3 9.8" fill="none" stroke="#333" stroke-width="1.15"/></svg><div style="position:absolute;left:141px;top:90.82px;font-size:11.2px;line-height:11.2px;color:#333;font-weight:400;white-space:nowrap;">U</div><div style="position:absolute;left:141px;top:102px;width:9px;height:1.2px;background:#333"></div><svg style="position:absolute;left:158px;top:96.5px;" width="5" height="3" viewBox="0 0 5 3"><path d="M0 0 H5 L2.5 3 Z" fill="#444"/></svg><div style="position:absolute;left:171px;top:88px;width:1px;height:19px;background:#C8C6C4"></div><div style="position:absolute;left:180.5px;top:90.37px;font-size:12.2px;line-height:12.2px;color:#333;font-weight:400;white-space:nowrap;">A</div><svg style="position:absolute;left:187.5px;top:90.5px;" width="7" height="4" viewBox="0 0 7 4"><path d="M0.7 3.3 L3.5 0.8 L6.3 3.3" fill="none" stroke="#2B88D8" stroke-width="1.2"/></svg><div style="position:absolute;left:200.8px;top:91.98px;font-size:10.3px;line-height:10.3px;color:#333;font-weight:400;white-space:nowrap;">A</div><svg style="position:absolute;left:208.5px;top:90.5px;" width="6" height="4" viewBox="0 0 6 4"><path d="M0.7 0.8 L3 3 L5.3 0.8" fill="none" stroke="#2B88D8" stroke-width="1.2"/></svg><svg style="position:absolute;left:96px;top:111px;" width="16" height="16" viewBox="0 0 16 16"><rect x="1.5" y="1.5" width="13" height="12" fill="none" stroke="#A8A8A8" stroke-width="0.9" stroke-dasharray="1.2 1.2"/><path d="M8 1.5 V13.5 M1.5 7.5 H14.5" stroke="#A8A8A8" stroke-width="0.9" stroke-dasharray="1.2 1.2"/><path d="M1 14.5 H15" stroke="#222" stroke-width="1.3"/></svg><svg style="position:absolute;left:118px;top:118px;" width="5" height="3" viewBox="0 0 5 3"><path d="M0 0 H5 L2.5 3 Z" fill="#444"/></svg><div style="position:absolute;left:130px;top:110px;width:1px;height:19px;background:#C8C6C4"></div><svg style="position:absolute;left:137px;top:111px;" width="16" height="17" viewBox="0 0 16 17"><path d="M3.2 5.5 L7.5 1.2 L12.5 6.2 L8 10.7 C7.4 11.3 6.6 11.3 6 10.7 L3.2 7.9 C2.6 7.3 2.6 6.1 3.2 5.5 Z" fill="#fff" stroke="#333" stroke-width="1.1"/><path d="M5 3.5 V1.5 C5 0.6 6.5 0.6 6.5 1.5 V5" fill="none" stroke="#333" stroke-width="1"/><path d="M11.5 3.2 C13.8 3.5 14.5 6 13.8 9" fill="none" stroke="#2B88D8" stroke-width="1.4"/></svg><div style="position:absolute;left:137px;top:123px;width:15px;height:4px;background:#FFEB00"></div><svg style="position:absolute;left:157px;top:118px;" width="5" height="3" viewBox="0 0 5 3"><path d="M0 0 H5 L2.5 3 Z" fill="#444"/></svg><div style="position:absolute;left:171.5px;top:111.14px;font-size:13.3px;line-height:13.3px;color:#333;font-weight:400;white-space:nowrap;">A</div><div style="position:absolute;left:168.7px;top:123px;width:15px;height:4px;background:#E80000"></div><svg style="position:absolute;left:189px;top:118px;" width="5" height="3" viewBox="0 0 5 3"><path d="M0 0 H5 L2.5 3 Z" fill="#444"/></svg><div style="position:absolute;left:231px;top:64.7px;width:20.3px;height:21.1px;background:#C8C6C4"></div><div style="position:absolute;left:234.4px;top:67px;width:13.400000000000006px;height:1px;background:#3C3C3C"></div><div style="position:absolute;left:237.5px;top:71px;width:7.199999999999989px;height:1px;background:#3C3C3C"></div><div style="position:absolute;left:234.4px;top:75px;width:13.400000000000006px;height:1px;background:#3C3C3C"></div><div style="position:absolute;left:255px;top:70px;width:13.300000000000011px;height:1px;background:#3C3C3C"></div><div style="position:absolute;left:258px;top:74px;width:7.300000000000011px;height:1px;background:#3C3C3C"></div><div style="position:absolute;left:255px;top:78px;width:13.300000000000011px;height:1px;background:#3C3C3C"></div><div style="position:absolute;left:275.5px;top:74px;width:13.0px;height:1px;background:#3C3C3C"></div><div style="position:absolute;left:278.5px;top:78px;width:7.0px;height:1px;background:#3C3C3C"></div><div style="position:absolute;left:275.5px;top:81px;width:13.0px;height:1px;background:#3C3C3C"></div><svg style="position:absolute;left:298px;top:66px;" width="17" height="17" viewBox="0 0 17 17"><text x="1.5" y="9" font-size="10.5" font-family="Liberation Sans" fill="#3A3A3A">ab</text><text x="1.5" y="16.5" font-size="10.5" font-family="Liberation Sans" fill="#3A3A3A">c</text><path d="M13.8 9 C15 12 13.5 14 9.8 14 M12 12 L9.6 14 L12 16" fill="none" stroke="#2B88D8" stroke-width="1.3"/></svg><div style="position:absolute;left:251.25px;top:86.9px;width:20.4px;height:21.1px;background:#C8C6C4"></div><div style="position:absolute;left:234.4px;top:91px;width:13.400000000000006px;height:1px;background:#3C3C3C"></div><div style="position:absolute;left:255px;top:91px;width:13.300000000000011px;height:1px;background:#3C3C3C"></div><div style="position:absolute;left:275.5px;top:91px;width:13.0px;height:1px;background:#3C3C3C"></div><div style="position:absolute;left:234.4px;top:94px;width:9.099999999999994px;height:1px;background:#3C3C3C"></div><div style="position:absolute;left:257.5px;top:94px;width:8.300000000000011px;height:1px;background:#3C3C3C"></div><div style="position:absolute;left:279.5px;top:94px;width:9.0px;height:1px;background:#3C3C3C"></div><div style="position:absolute;left:234.4px;top:98px;width:13.400000000000006px;height:1px;background:#3C3C3C"></div><div style="position:absolute;left:255px;top:98px;width:13.300000000000011px;height:1px;background:#3C3C3C"></div><div style="position:absolute;left:275.5px;top:98px;width:13.0px;height:1px;background:#3C3C3C"></div><div style="position:absolute;left:234.4px;top:102px;width:9.099999999999994px;height:1px;background:#3C3C3C"></div><div style="position:absolute;left:257.5px;top:102px;width:8.300000000000011px;height:1px;background:#3C3C3C"></div><div style="position:absolute;left:279.5px;top:102px;width:9.0px;height:1px;background:#3C3C3C"></div><div style="position:absolute;left:295px;top:86.9px;width:32px;height:21.1px;background:#C8C6C4"></div><svg style="position:absolute;left:297px;top:89px;" width="16" height="16" viewBox="0 0 16 16"><rect x="0.7" y="0.7" width="14" height="14" rx="1" fill="#fff" stroke="#333" stroke-width="1.2"/><rect x="1.8" y="4.3" width="11.8" height="6.8" fill="#fff" stroke="#2B78C8" stroke-width="1"/><path d="M0.7 4 H14.7 M0.7 11.4 H14.7 M7.7 11.4 V14.7 M7.7 0.7 V4" stroke="#333" stroke-width="0.9"/><path d="M3.5 7.7 H12 M5.3 5.9 L3.5 7.7 L5.3 9.5 M10.2 5.9 L12 7.7 L10.2 9.5" fill="none" stroke="#2B88D8" stroke-width="1"/></svg><svg style="position:absolute;left:318px;top:96.5px;" width="5" height="3" viewBox="0 0 5 3"><path d="M0 0 H5 L2.5 3 Z" fill="#444"/></svg><div style="position:absolute;left:234.2px;top:113px;width:13.599999999999994px;height:1px;background:#3C3C3C"></div><div style="position:absolute;left:241.2px;top:117px;width:6.599999999999994px;height:1px;background:#3C3C3C"></div><div style="position:absolute;left:241.2px;top:121px;width:6.599999999999994px;height:1px;background:#3C3C3C"></div><div style="position:absolute;left:234.2px;top:124px;width:13.599999999999994px;height:1px;background:#3C3C3C"></div><div style="position:absolute;left:255px;top:113px;width:13.600000000000023px;height:1px;background:#3C3C3C"></div><div style="position:absolute;left:262px;top:117px;width:6.600000000000023px;height:1px;background:#3C3C3C"></div><div style="position:absolute;left:262px;top:121px;width:6.600000000000023px;height:1px;background:#3C3C3C"></div><div style="position:absolute;left:255px;top:124px;width:13.600000000000023px;height:1px;background:#3C3C3C"></div><svg style="position:absolute;left:234px;top:115px;" width="7" height="6" viewBox="0 0 7 6"><path d="M6.5 3 H1 M3.3 0.8 L1 3 L3.3 5.2" fill="none" stroke="#2B88D8" stroke-width="1.3"/></svg><svg style="position:absolute;left:255px;top:115px;" width="7" height="6" viewBox="0 0 7 6"><path d="M0.3 3 H5.8 M3.5 0.8 L5.8 3 L3.5 5.2" fill="none" stroke="#2B88D8" stroke-width="1.3"/></svg><div style="position:absolute;left:275px;top:110px;width:1px;height:19px;background:#C8C6C4"></div><svg style="position:absolute;left:281px;top:110px;" width="19" height="18" viewBox="0 0 19 18"><text x="-1" y="10" font-size="9.5" font-family="Liberation Sans" fill="#444" transform="rotate(-50 5 7)">ab</text><path d="M5.5 16.5 L16.5 6.5 M12.5 6 H16.8 V10.3" fill="none" stroke="#2B88D8" stroke-width="1.2"/></svg><svg style="position:absolute;left:301px;top:118px;" width="5" height="3" viewBox="0 0 5 3"><path d="M0 0 H5 L2.5 3 Z" fill="#444"/></svg><div style="position:absolute;left:342.25px;top:65.25px;width:71.5px;height:20.35px;background:#fff;border:1px solid #C6C6C6"></div><div style="position:absolute;left:345.5px;top:70.10px;font-size:11.7px;line-height:11.7px;color:#333;font-weight:400;white-space:nowrap;transform:scaleX(0.86);transform-origin:0 0">General</div><svg style="position:absolute;left:404.5px;top:74px;" width="5" height="3" viewBox="0 0 5 3"><path d="M0 0 H5 L2.5 3 Z" fill="#444"/></svg><svg style="position:absolute;left:346px;top:90px;" width="11" height="16" viewBox="0 0 11 16"><path d="M8.6 3.6 C8 2.6 6.8 2.2 5.5 2.2 C3.5 2.2 2.4 3.2 2.4 4.8 C2.4 8.2 8.8 7.4 8.8 11 C8.8 12.7 7.4 13.6 5.5 13.6 C4 13.6 2.8 13 2.1 12" fill="none" stroke="#333" stroke-width="1.15"/><path d="M5.5 0.3 V15.5" stroke="#333" stroke-width="1.1"/></svg><svg style="position:absolute;left:364.5px;top:96.5px;" width="5" height="3" viewBox="0 0 5 3"><path d="M0 0 H5 L2.5 3 Z" fill="#444"/></svg><svg style="position:absolute;left:376px;top:90px;" width="16" height="14" viewBox="0 0 16 14"><circle cx="4" cy="4.3" r="2.6" fill="none" stroke="#333" stroke-width="1.15"/><circle cx="11.6" cy="10" r="2.6" fill="none" stroke="#333" stroke-width="1.15"/><path d="M12.8 1.2 L2.8 13" stroke="#333" stroke-width="1.15"/></svg><svg style="position:absolute;left:399px;top:91px;" width="10" height="15" viewBox="0 0 10 15"><circle cx="4.8" cy="4.6" r="3.2" fill="#333"/><path d="M7.4 5.2 C7.6 9 6 11.5 2.8 12.8" fill="none" stroke="#333" stroke-width="1.7"/></svg><svg style="position:absolute;left:344px;top:111px;" width="17" height="17" viewBox="0 0 17 17"><text x="10" y="8.3" font-size="7.8" font-family="Liberation Sans" fill="#555">0</text><text x="2.5" y="15.3" font-size="7.8" font-family="Liberation Sans" fill="#555">.00</text><path d="M9.5 5.5 H1.8 M4.6 2.7 L1.8 5.5 L4.6 8.3" fill="none" stroke="#2B88D8" stroke-width="1.3"/></svg><svg style="position:absolute;left:364px;top:111px;" width="17" height="17" viewBox="0 0 17 17"><text x="2.5" y="7.8" font-size="7.8" font-family="Liberation Sans" fill="#555">.00</text><text x="10.8" y="15.3" font-size="7.8" font-family="Liberation Sans" fill="#555">0</text><path d="M1 11.5 H9 M6.3 8.7 L9 11.5 L6.3 14.3" fill="none" stroke="#2B88D8" stroke-width="1.3"/></svg><svg style="position:absolute;left:431px;top:67px;" width="16" height="14" viewBox="0 0 16 14"><rect x="0.6" y="0.6" width="14.8" height="12.8" fill="#fff" stroke="#333" stroke-width="1.1"/><rect x="4" y="1" width="7.5" height="3.6" fill="#E8463C"/><rect x="4" y="4.6" width="3.7" height="4.2" fill="#2B88D8"/><rect x="4" y="8.8" width="7.5" height="4.2" fill="#E8463C"/><path d="M0.6 4.6 H15.4 M0.6 8.8 H15.4 M4 0.6 V13.4 M7.7 0.6 V13.4 M11.5 0.6 V13.4" stroke="#555" stroke-width="0.8"/></svg><div style="position:absolute;left:449.7px;top:69.35px;font-size:11.4px;line-height:11.4px;color:#333;font-weight:400;white-space:nowrap;">Conditional Formatting</div><svg style="position:absolute;left:567px;top:73px;" width="4.5" height="3" viewBox="0 0 4.5 3"><path d="M0 0 H4.5 L2.25 3 Z" fill="#444"/></svg><svg style="position:absolute;left:431px;top:88px;" width="17" height="16" viewBox="0 0 17 16"><rect x="0.6" y="0.6" width="14.8" height="14" fill="#fff" stroke="#333" stroke-width="1.1"/><path d="M0.6 4.5 H15.4 M0.6 8.5 H15.4 M5 0.6 V14.6 M10 0.6 V14.6" stroke="#666" stroke-width="0.8"/><rect x="5" y="4.5" width="10" height="10" fill="#7FB6E8"/><path d="M6.5 10.5 L15.5 2" stroke="#444" stroke-width="2"/><path d="M2.5 15 C3 12.5 4.5 11 6.5 10.5 L7.5 11.5 C6.8 13.5 5 15 2.5 15 Z" fill="#2B78C8"/></svg><div style="position:absolute;left:449.7px;top:90.35px;font-size:11.4px;line-height:11.4px;color:#333;font-weight:400;white-space:nowrap;transform:scaleX(0.952);transform-origin:0 0">Format as Table</div><svg style="position:absolute;left:529px;top:94px;" width="4.5" height="3" viewBox="0 0 4.5 3"><path d="M0 0 H4.5 L2.25 3 Z" fill="#444"/></svg><svg style="position:absolute;left:431px;top:109px;" width="17" height="16" viewBox="0 0 17 16"><rect x="0.6" y="0.6" width="14.8" height="14" fill="#fff" stroke="#333" stroke-width="1.1"/><path d="M0.6 3 H15.4 M3 0.6 V14.6" stroke="#666" stroke-width="0.8"/><rect x="3" y="3" width="12" height="11.6" fill="#7FB6E8"/><path d="M6.5 10.5 L15.5 2" stroke="#444" stroke-width="2"/><path d="M2.5 15 C3 12.5 4.5 11 6.5 10.5 L7.5 11.5 C6.8 13.5 5 15 2.5 15 Z" fill="#2B78C8"/></svg><div style="position:absolute;left:449.7px;top:111.95px;font-size:11.4px;line-height:11.4px;color:#333;font-weight:400;white-space:nowrap;transform:scaleX(0.91);transform-origin:0 0">Cell Styles</div><svg style="position:absolute;left:502.5px;top:115.5px;" width="4.5" height="3" viewBox="0 0 4.5 3"><path d="M0 0 H4.5 L2.25 3 Z" fill="#444"/></svg><svg style="position:absolute;left:595.5px;top:67px;" width="17" height="15" viewBox="0 0 17 15"><rect x="0.6" y="0.6" width="14.8" height="13" fill="#fff" stroke="#333" stroke-width="1.1"/><path d="M0.6 4.8 H15.4 M0.6 9.2 H15.4 M5.5 0.6 V13.6 M10.5 0.6 V13.6" stroke="#444" stroke-width="0.9"/><rect x="5.5" y="4.8" width="9.5" height="4.4" fill="#5BA3E0"/><path d="M8 7 H1.2 M3.5 4.7 L1.2 7 L3.5 9.3" fill="none" stroke="#2B88D8" stroke-width="1.2"/></svg><div style="position:absolute;left:614px;top:69.85px;font-size:11.4px;line-height:11.4px;color:#333;font-weight:400;white-space:nowrap;transform:scaleX(0.95);transform-origin:0 0">Insert</div><svg style="position:absolute;left:650px;top:73px;" width="4.5" height="3" viewBox="0 0 4.5 3"><path d="M0 0 H4.5 L2.25 3 Z" fill="#444"/></svg><svg style="position:absolute;left:595.5px;top:88px;" width="17" height="15" viewBox="0 0 17 15"><rect x="0.6" y="0.6" width="14.8" height="13" fill="#fff" stroke="#333" stroke-width="1.1" stroke-dasharray="2 1"/><path d="M0.6 4.8 H15.4 M0.6 9.2 H15.4" stroke="#444" stroke-width="0.9"/><rect x="3" y="4.2" width="5.5" height="5.6" fill="#5BA3E0" stroke="#2B78C8" stroke-width="0.9"/><path d="M10 4.8 L14 9.2 M14 4.8 L10 9.2" stroke="#E8463C" stroke-width="1.3"/></svg><div style="position:absolute;left:614px;top:90.85px;font-size:11.4px;line-height:11.4px;color:#333;font-weight:400;white-space:nowrap;transform:scaleX(0.94);transform-origin:0 0">Delete</div><svg style="position:absolute;left:654px;top:94px;" width="4.5" height="3" viewBox="0 0 4.5 3"><path d="M0 0 H4.5 L2.25 3 Z" fill="#444"/></svg><svg style="position:absolute;left:595.5px;top:108px;" width="17" height="17" viewBox="0 0 17 17"><rect x="0.6" y="3.6" width="14.8" height="12.5" fill="#fff" stroke="#333" stroke-width="1.1"/><path d="M0.6 7.8 H15.4 M0.6 12 H15.4 M5.5 3.6 V16 M10.5 3.6 V16" stroke="#444" stroke-width="0.9"/><rect x="3" y="6" width="10" height="7" fill="#5BA3E0"/><path d="M2 1.5 H14 M2 0 V3 M14 0 V3" stroke="#2B88D8" stroke-width="1.1"/></svg><div style="position:absolute;left:614px;top:111.95px;font-size:11.4px;line-height:11.4px;color:#333;font-weight:400;white-space:nowrap;">Format</div><svg style="position:absolute;left:652px;top:115.5px;" width="4.5" height="3" viewBox="0 0 4.5 3"><path d="M0 0 H4.5 L2.25 3 Z" fill="#444"/></svg><svg style="position:absolute;left:681px;top:67px;" width="14" height="15" viewBox="0 0 14 15"><path d="M12.5 2.5 V0.8 H1 L6.8 7.2 L1 13.7 H12.5 V12" fill="none" stroke="#333" stroke-width="1.1"/></svg><svg style="position:absolute;left:701px;top:73px;" width="4.5" height="3" viewBox="0 0 4.5 3"><path d="M0 0 H4.5 L2.25 3 Z" fill="#444"/></svg><svg style="position:absolute;left:711px;top:66px;" width="20" height="17" viewBox="0 0 20 17"><text x="1" y="7.5" font-size="8.5" font-family="Liberation Sans" font-weight="bold" fill="#2B88D8">A</text><text x="1" y="16" font-size="8.5" font-family="Liberation Sans" font-weight="bold" fill="#333">Z</text><path d="M9 5 H18 L14.5 9.5 V14 L12.5 12.5 V9.5 Z" fill="none" stroke="#333" stroke-width="1.1"/></svg><svg style="position:absolute;left:731px;top:73px;" width="4.5" height="3" viewBox="0 0 4.5 3"><path d="M0 0 H4.5 L2.25 3 Z" fill="#444"/></svg><svg style="position:absolute;left:679px;top:88px;" width="17" height="15" viewBox="0 0 17 15"><rect x="0.6" y="0.6" width="15" height="13.5" fill="#fff" stroke="#333" stroke-width="1.1"/><path d="M0.6 3.5 H15.6" stroke="#333" stroke-width="1.1"/><path d="M8 5.5 V11.5 M5.5 9 L8 11.5 L10.5 9" fill="none" stroke="#2B88D8" stroke-width="1.2"/></svg><svg style="position:absolute;left:699px;top:94px;" width="4.5" height="3" viewBox="0 0 4.5 3"><path d="M0 0 H4.5 L2.25 3 Z" fill="#444"/></svg><svg style="position:absolute;left:712px;top:87px;" width="17" height="17" viewBox="0 0 17 17"><circle cx="10" cy="6.5" r="5" fill="none" stroke="#333" stroke-width="1.3"/><path d="M6.5 10 L1 15.5" stroke="#333" stroke-width="1.5"/></svg><svg style="position:absolute;left:731px;top:94px;" width="4.5" height="3" viewBox="0 0 4.5 3"><path d="M0 0 H4.5 L2.25 3 Z" fill="#444"/></svg><svg style="position:absolute;left:680px;top:109px;" width="17" height="16" viewBox="0 0 17 16"><path d="M1.5 11 L10.5 3 C11.3 2.3 12.3 2.3 13 3 L14.5 4.5 C15.2 5.2 15.2 6.2 14.5 7 L6 15 H3.5 Z" fill="#fff" stroke="#A43FB6" stroke-width="1.2"/><path d="M1.5 11 L5 8 L8.8 12 L6 15 H3.5 Z" fill="#B146C2"/></svg><svg style="position:absolute;left:699px;top:115.5px;" width="4.5" height="3" viewBox="0 0 4.5 3"><path d="M0 0 H4.5 L2.25 3 Z" fill="#444"/></svg><svg style="position:absolute;left:782px;top:139px;" width="9" height="6" viewBox="0 0 9 6"><path d="M0.8 5 L4.5 1.2 L8.2 5" fill="none" stroke="#444" stroke-width="1.2"/></svg><svg style="position:absolute;left:566px;top:40px;" width="14" height="14" viewBox="0 0 14 14"><circle cx="8.5" cy="5.5" r="4.3" fill="none" stroke="#444" stroke-width="1.1"/><path d="M5.5 8.5 L1 13" stroke="#444" stroke-width="1.2"/></svg><svg style="position:absolute;left:695px;top:41px;" width="13" height="12" viewBox="0 0 13 12"><path d="M1 4 V11 H11 V8" fill="none" stroke="#217346" stroke-width="1.1"/><path d="M3.5 8.5 C4 5 6.5 3.5 9.5 3.5 M8 1 L10.5 3.5 L8 6" fill="none" stroke="#217346" stroke-width="1.1"/></svg><svg style="position:absolute;left:769px;top:42px;" width="11" height="11" viewBox="0 0 11 11"><path d="M0.7 0.7 H10.3 V7 H4 L1.7 9.5 V7 H0.7 Z" fill="none" stroke="#217346" stroke-width="1.1"/></svg><svg style="position:absolute;left:112px;top:166px;" width="3" height="13" viewBox="0 0 3 13"><circle cx="1.5" cy="1.5" r="0.8" fill="#999"/><circle cx="1.5" cy="6.5" r="0.8" fill="#999"/><circle cx="1.5" cy="11.5" r="0.8" fill="#999"/></svg><svg style="position:absolute;left:140.5px;top:167.5px;" width="9" height="9" viewBox="0 0 9 9"><path d="M0.5 0.5 L8.5 8.5 M8.5 0.5 L0.5 8.5" stroke="#BDBDBD" stroke-width="1.1"/></svg><svg style="position:absolute;left:173px;top:167px;" width="12" height="10" viewBox="0 0 12 10"><path d="M0.8 5.5 L4 8.8 L11.2 0.8" fill="none" stroke="#BDBDBD" stroke-width="1.1"/></svg><div style="position:absolute;left:206.5px;top:165.50px;font-size:13px;line-height:13px;color:#444;font-weight:700;white-space:nowrap;font-family:'Liberation Serif'"><i>f</i><i style="font-size:9.5px">x</i></div><svg style="position:absolute;left:88px;top:170px;" width="7" height="4" viewBox="0 0 7 4"><path d="M0 0 H7 L3.5 3.5 Z" fill="#5F5F5F"/></svg><svg style="position:absolute;left:784px;top:170px;" width="8" height="5" viewBox="0 0 8 5"><path d="M0.7 0.7 L4 4 L7.3 0.7" fill="none" stroke="#444" stroke-width="1.1"/></svg><div style="position:absolute;left:1px;top:875px;width:23px;height:11px;overflow:hidden"><div style="position:absolute;left:0;top:3.91px;width:23px;text-align:center;font-size:11px;line-height:11px;color:#444">36</div></div></body></html>
